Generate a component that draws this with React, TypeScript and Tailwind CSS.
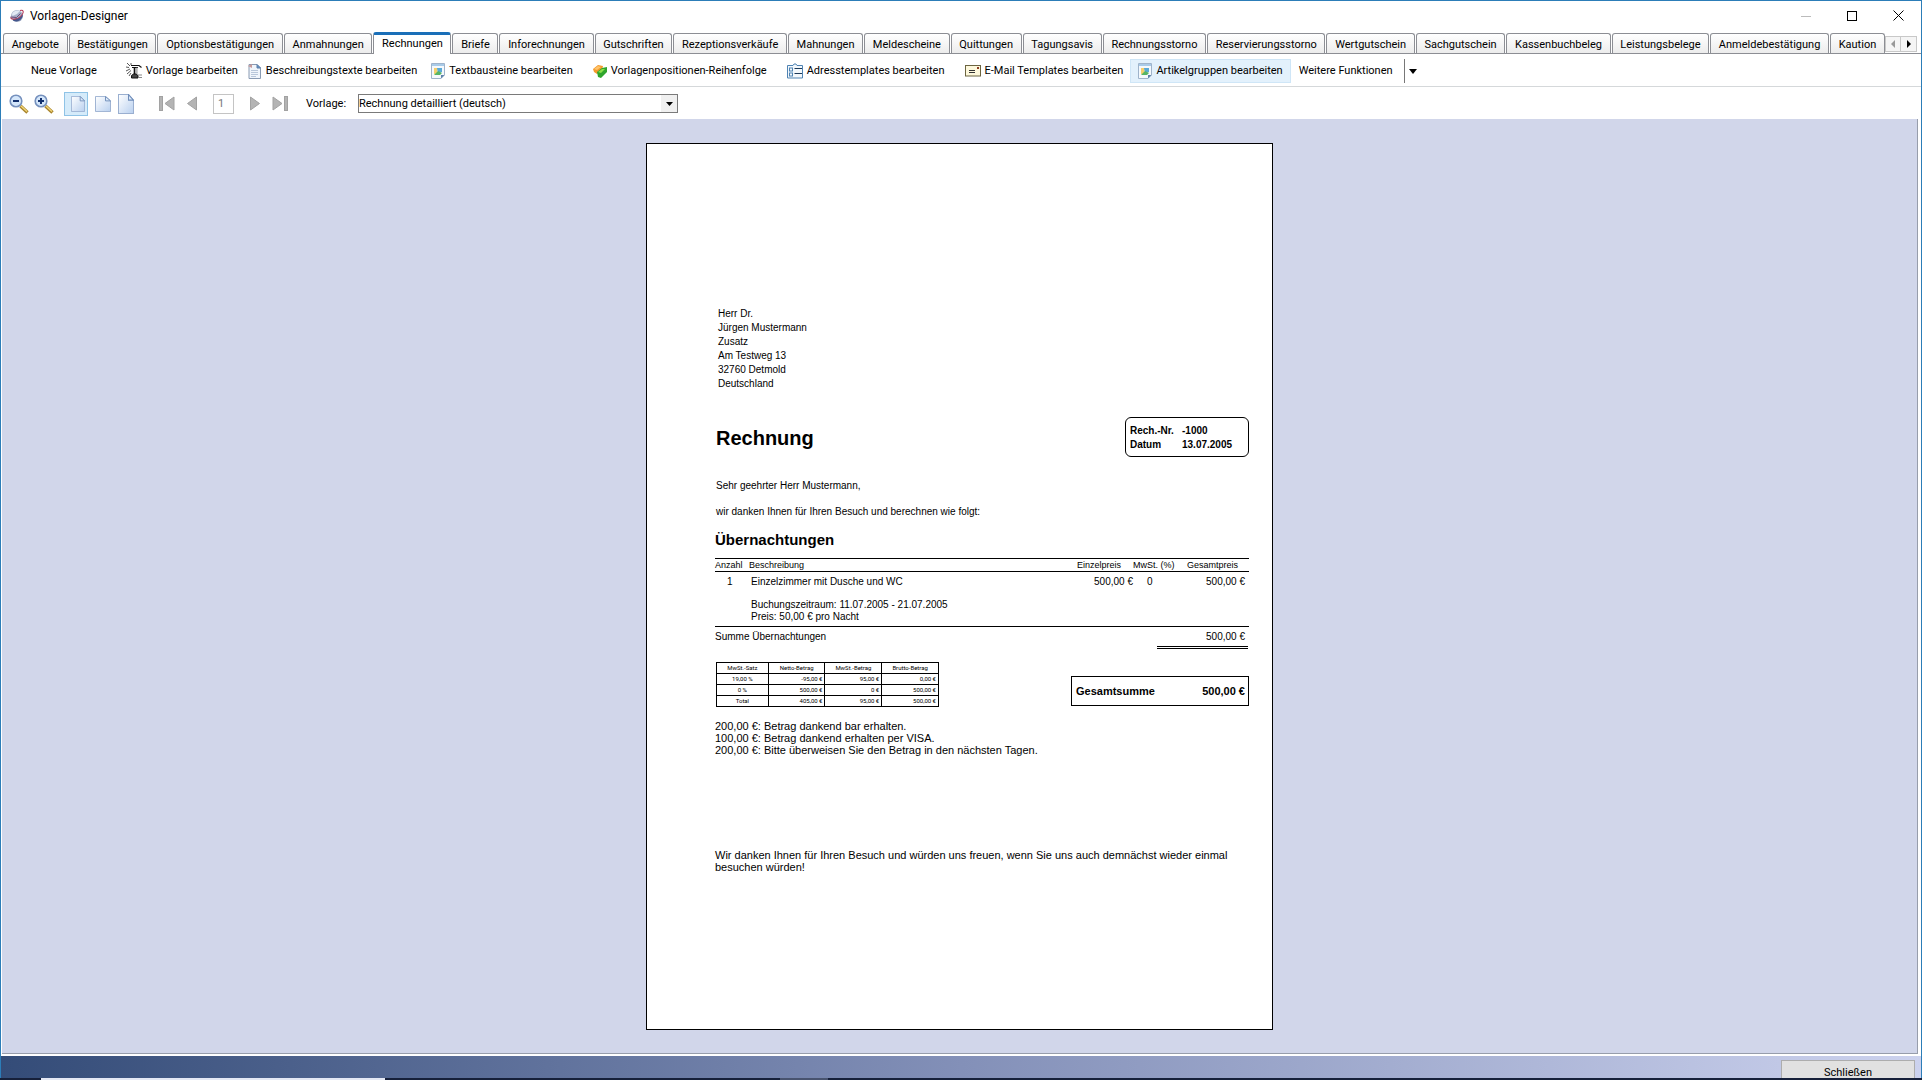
import React, { useState } from "react";
import clsx from "clsx";

const tabs = [
  "Angebote",
  "Bestätigungen",
  "Optionsbestätigungen",
  "Anmahnungen",
  "Rechnungen",
  "Briefe",
  "Inforechnungen",
  "Gutschriften",
  "Rezeptionsverkäufe",
  "Mahnungen",
  "Meldescheine",
  "Quittungen",
  "Tagungsavis",
  "Rechnungsstorno",
  "Reservierungsstorno",
  "Wertgutschein",
  "Sachgutschein",
  "Kassenbuchbeleg",
  "Leistungsbelege",
  "Anmeldebestätigung",
  "Kaution",
];

const address = [
  "Herr Dr.",
  "Jürgen Mustermann",
  "Zusatz",
  "Am Testweg 13",
  "32760 Detmold",
  "Deutschland",
];

const taxRows = [
  ["19,00 %", "-95,00 €", "95,00 €", "0,00 €"],
  ["0 %", "500,00 €", "0 €", "500,00 €"],
  ["Total", "405,00 €", "95,00 €", "500,00 €"],
];

function LogoIcon() {
  return (
    <svg width="16" height="16" viewBox="0 0 16 16">
      <circle cx="8" cy="8" r="6" fill="#a7b1c9" />
      <path d="M3 6C4 3 8 1.500 11 3L8 6L3.500 8Z" fill="#e3e9f4" />
      <path d="M4 12.500C8 14.500 12 13 13.500 9L14 6C11 10 8 11 4 11Z" fill="#44578c" />
      <path
        d="M1.500 9.500C2.500 12.500 9 11.500 12.500 7.500C15.500 4 14.500 1.500 11 2.500"
        fill="none"
        stroke="#b23a58"
        strokeWidth="1.100"
      />
      <path d="M1.500 9L7.500 9.500L11.500 5.500" fill="none" stroke="#6b4a78" />
    </svg>
  );
}

function HammerIcon() {
  return (
    <svg width="16" height="16" viewBox="0 0 16 16" fill="none" stroke="#111">
      <path d="M5 2.500H13L15.500 4.500M6 4.500H12" strokeWidth="1.200" />
      <path d="M8.500 4V12" strokeWidth="1.600" />
      <path d="M11 4.500V11M10 5V11" stroke="#999" />
      <path d="M0 4L3 4.500M1 0L4 3M5 0V2M0 8L4 6M1 11L5 7.500M3 13L5 10" stroke="#444" strokeWidth=".9" />
      <path d="M5.500 15V12.500L7.500 11H10L12 12.500V15Z" fill="#444" />
      <path d="M12 14.500H16M12 12H16" stroke="#888" />
    </svg>
  );
}

function SheetIcon() {
  return (
    <svg width="14" height="16" viewBox="0 0 14 16">
      <path d="M1 1.500H9L12.500 5V15.500H1Z" fill="#f0f5fb" stroke="#8a9bb3" />
      <path d="M9 1.500V5H12.500Z" fill="#5f94cc" stroke="#5f7fa8" />
      <path d="M0 3L4 1V5Z" fill="#c79a9a" />
      <path d="M3 7.500H10M3 9.500H10M3 11.500H10M3 13.500H8" stroke="#b9c7da" />
    </svg>
  );
}

function PictureIcon() {
  return (
    <svg width="14" height="16" viewBox="0 0 14 16">
      <path d="M.5.500H13.500V12L10 15.500H.5Z" fill="#f5f9fd" stroke="#9fb3ca" />
      <path d="M1 1H13V3H1Z" fill="#a9cbe8" />
      <path d="M3 5H7L6 11H3Z" fill="#f4cf6d" />
      <path d="M6 5H11V9L7 10Z" fill="#5aa9d6" />
      <path d="M3 12L7 8L11 10L9 12Z" fill="#57b565" />
      <path d="M10 15.500V12H13.500Z" fill="#5d82aa" />
    </svg>
  );
}

function OrderIcon() {
  return (
    <svg width="14" height="16" viewBox="0 0 14 16">
      <path d="M0 6L5 2L10 3L9 7L4 11L1 9Z" fill="#f39a2c" />
      <path d="M1 6L5 3L8 4L4 7Z" fill="#ffc46b" />
      <path d="M4 9L9 5L14 4V9L8 15L5 14Z" fill="#2fa52c" />
      <path d="M5 9L9 6L12 6L8 10Z" fill="#8ae04a" />
    </svg>
  );
}

function AddressIcon() {
  return (
    <svg width="16" height="16" viewBox="0 0 16 16" fill="none" stroke="#4f83b3">
      <path d="M.5 2.500H6L7 1H9L10 2.500H15.500V15H.5Z" fill="#f3f8fc" />
      <rect x="2.500" y="5" width="3" height="3" />
      <rect x="2.500" y="10" width="3" height="3" />
      <path d="M7.500 5.500H15M7.500 10.500H15" stroke="#1c3958" />
    </svg>
  );
}

function MailIcon() {
  return (
    <svg width="16" height="12" viewBox="0 0 16 12">
      <rect x=".5" y=".5" width="15" height="10.500" fill="#fdf8dc" stroke="#6b6440" />
      <path d="M4 5.500H10M4 7.500H10" stroke="#333" />
      <rect x="12" y="2" width="2" height="2" fill="#8c3a20" />
    </svg>
  );
}

function ZoomIcon({ plus }: { plus?: boolean }) {
  return (
    <svg width="20" height="20" viewBox="0 0 20 20">
      <path d="M11.500 12L18.500 18.500" stroke="#a8842a" strokeWidth="3.400" />
      <path d="M12 12L18 17.600" stroke="#f3d77a" strokeWidth="1.400" />
      <circle cx="7" cy="7" r="5.800" fill="#d4e6fa" stroke="#7590bd" strokeWidth="1.600" />
      <path d={plus ? "M4 7H10M7 4V10" : "M4 7H10"} stroke="#12306e" strokeWidth="2" />
    </svg>
  );
}

function PageIcon({ size }: { size: "sm" | "md" | "lg" }) {
  const box = {
    sm: "h-4 w-[14px]",
    md: "h-4 w-4",
    lg: "h-5 w-4",
  };
  return (
    <svg className={box[size]} viewBox="0 0 16 18" preserveAspectRatio="none">
      <defs>
        <linearGradient id={"page-" + size} x1="0" y1="0" x2="1" y2="1">
          <stop offset="0" stopColor="#fff" />
          <stop offset="1" stopColor="#b9d0ef" />
        </linearGradient>
      </defs>
      <path
        d="M.5.500H10.500L15.500 5.500V17.500H.5Z"
        fill={`url(#page-${size})`}
        stroke="#9aafd0"
      />
      <path d="M10.500.500V5.500H15.500Z" fill="#dce9f8" stroke="#6f8dba" />
    </svg>
  );
}

function NavIcon({ dir, bar }: { dir: "left" | "right"; bar?: boolean }) {
  return (
    <svg
      className={clsx("h-[15px]", bar ? "w-4" : "w-[10px]")}
      viewBox={bar ? "0 0 16 15" : "0 0 10 15"}
      fill="#b4b4b4"
      stroke="#a2a2a2"
    >
      {bar && <rect x={dir === "left" ? 0.5 : 12.5} y=".5" width="3" height="14" />}
      {dir === "left" ? (
        <path d={bar ? "M15 1V14L6 7.500Z" : "M9.500 1V14L.5 7.500Z"} />
      ) : (
        <path d={bar ? "M1 1V14L10 7.500Z" : "M.5 1V14L9.500 7.500Z"} />
      )}
    </svg>
  );
}

type ToolButtonProps = {
  icon?: React.ReactNode;
  label: string;
  className?: string;
};

function ToolButton({ icon, label, className }: ToolButtonProps) {
  return (
    <button
      type="button"
      className={clsx(
        "flex h-6 shrink-0 items-center gap-1 border whitespace-nowrap",
        className ?? "border-transparent px-1"
      )}
    >
      {icon}
      <span>{label}</span>
    </button>
  );
}

function TitleBar() {
  return (
    <header className="flex h-[31px] shrink-0 items-center bg-white pb-[2px] pl-2">
      <LogoIcon />
      <h1 className="ml-[5px] flex-1 text-xs">Vorlagen-Designer</h1>
      <button type="button" aria-label="Minimieren" className="flex h-full w-[46px] items-center justify-center">
        <svg width="10" height="10" viewBox="0 0 10 10" stroke="#bbb">
          <path d="M0 5.500H10" />
        </svg>
      </button>
      <button type="button" aria-label="Maximieren" className="flex h-full w-[46px] items-center justify-center">
        <svg width="10" height="10" viewBox="0 0 10 10" stroke="#000" fill="none">
          <rect x=".5" y=".5" width="9" height="9" />
        </svg>
      </button>
      <button type="button" aria-label="Fenster schließen" className="flex h-full w-[46px] items-center justify-center">
        <svg width="11" height="11" viewBox="0 0 11 11" stroke="#000">
          <path d="M.5.500L10.500 10.500M10.500.500L.5 10.500" />
        </svg>
      </button>
    </header>
  );
}

function TabStrip() {
  const [active, setActive] = useState("Rechnungen");

  return (
    <nav className="flex h-[22px] shrink-0 items-end border-b border-[#8c8e94] bg-white pr-1 pl-[2px]">
      <div className="flex h-full min-w-0 flex-1 items-end gap-px" role="tablist">
        {tabs.map(tab => (
          <button
            key={tab}
            type="button"
            role="tab"
            aria-selected={tab === active}
            onClick={() => setActive(tab)}
            className={clsx(
              "flex-auto rounded-t-[3px] border border-b-0 border-[#8c8e94] px-1 whitespace-nowrap",
              tab === active
                ? "-mb-px h-[22px] border-t-[3px] border-t-[#1a6fb8] bg-white pb-[2px]"
                : "h-5 bg-linear-to-b from-white to-[#ececec] pt-[2px]"
            )}
          >
            {tab}
          </button>
        ))}
      </div>
      <div className="flex h-full items-start pt-1">
        <button type="button" aria-label="Zurück" className="flex h-4 w-4 items-center justify-center border border-[#c8c8c8] bg-[#f5f5f5]">
          <svg width="4" height="8" viewBox="0 0 4 8" fill="#999">
            <path d="M4 0V8L0 4Z" />
          </svg>
        </button>
        <button type="button" aria-label="Weiter" className="flex h-4 w-4 items-center justify-center border border-l-0 border-[#c8c8c8] bg-[#f5f5f5]">
          <svg width="4" height="8" viewBox="0 0 4 8">
            <path d="M0 0V8L4 4Z" />
          </svg>
        </button>
      </div>
    </nav>
  );
}

function EditToolbar() {
  return (
    <div className="flex h-[33px] shrink-0 items-center border-b border-[#d5d8da] bg-white pt-[2px] pl-[25px]">
      <ToolButton label="Neue Vorlage" />
      <div className="ml-[19px] flex items-center">
        <ToolButton icon={<HammerIcon />} label="Vorlage bearbeiten" />
        <ToolButton icon={<SheetIcon />} label="Beschreibungstexte bearbeiten" />
      </div>
      <div className="ml-1 flex items-center gap-[10px]">
        <ToolButton icon={<PictureIcon />} label="Textbausteine bearbeiten" />
        <ToolButton icon={<OrderIcon />} label="Vorlagenpositionen-Reihenfolge" />
        <ToolButton icon={<AddressIcon />} label="Adresstemplates bearbeiten" />
        <ToolButton icon={<MailIcon />} label="E-Mail Templates bearbeiten" />
      </div>
      <ToolButton
        icon={<PictureIcon />}
        label="Artikelgruppen bearbeiten"
        className="ml-[2px] border-[#cfe6f7] bg-[#e3f1fc] px-[7px]"
      />
      <ToolButton label="Weitere Funktionen" className="border-transparent pr-[10px] pl-[7px]" />
      <button type="button" aria-label="Weitere Funktionen öffnen" className="flex h-6 items-center border-l border-[#777] px-1">
        <svg width="8" height="5" viewBox="0 0 8 5">
          <path d="M0 0H8L4 5Z" />
        </svg>
      </button>
    </div>
  );
}

function ViewToolbar() {
  return (
    <div className="flex h-8 shrink-0 items-center bg-white pt-px pl-2">
      <div className="flex gap-[5px]">
        <button type="button" aria-label="Verkleinern">
          <ZoomIcon />
        </button>
        <button type="button" aria-label="Vergrößern">
          <ZoomIcon plus />
        </button>
      </div>
      <div className="ml-[10px] flex items-center gap-[7px]">
        <button type="button" aria-label="Ganze Seite" className="flex h-6 w-6 items-center justify-end border border-[#8fc3e6] bg-[#d5ebfa] pr-[2px]">
          <PageIcon size="sm" />
        </button>
        <button type="button" aria-label="Seitenbreite">
          <PageIcon size="md" />
        </button>
        <button type="button" aria-label="Originalgröße">
          <PageIcon size="lg" />
        </button>
      </div>
      <div className="ml-[25px] flex items-center gap-3">
        <button type="button" aria-label="Erste Seite">
          <NavIcon dir="left" bar />
        </button>
        <button type="button" aria-label="Vorige Seite">
          <NavIcon dir="left" />
        </button>
        <input
          aria-label="Seite"
          defaultValue="1"
          className="mx-1 h-5 w-[21px] border border-[#c4c4c4] pl-1 text-[#777]"
        />
        <button type="button" aria-label="Nächste Seite">
          <NavIcon dir="right" />
        </button>
        <button type="button" aria-label="Letzte Seite">
          <NavIcon dir="right" bar />
        </button>
      </div>
      <label htmlFor="template" className="ml-[18px] w-[52px]">
        Vorlage:
      </label>
      <div className="relative w-80">
        <select
          id="template"
          className="block h-[19px] w-full appearance-none border border-[#7a7a7a] bg-white"
        >
          <option>Rechnung detailliert (deutsch)</option>
        </select>
        <span className="pointer-events-none absolute top-px right-px flex h-[17px] w-4 items-center justify-center bg-[#f0f0f0]">
          <svg width="7" height="4" viewBox="0 0 7 4">
            <path d="M0 0H7L3.500 4Z" />
          </svg>
        </span>
      </div>
    </div>
  );
}

function Invoice() {
  return (
    <article className="aspect-[627/887] w-[627px] shrink-0 border border-black bg-white pt-[163px] pr-[23px] pl-[68px] font-['Liberation_Sans',Arial,sans-serif] text-[10px] leading-3">
      <address className="pl-[3px] leading-[14px] not-italic">
        {address.map(line => (
          <p key={line}>{line}</p>
        ))}
      </address>

      <div className="mt-[26px] flex items-center justify-between pl-px">
        <h2 className="pt-[2px] text-[20px] leading-6 font-bold">Rechnung</h2>
        <dl className="grid h-10 w-[124px] grid-cols-[52px_1fr] content-center rounded-md border border-black pt-px pl-1 leading-[14px] font-bold">
          <dt>Rech.-Nr.</dt>
          <dd>-1000</dd>
          <dt>Datum</dt>
          <dd>13.07.2005</dd>
        </dl>
      </div>

      <div className="mt-[23px] space-y-[14px] pl-px">
        <p>Sehr geehrter Herr Mustermann,</p>
        <p>wir danken Ihnen für Ihren Besuch und berechnen wie folgt:</p>
      </div>

      <h3 className="mt-3 text-[15px] leading-5 font-bold">Übernachtungen</h3>
      <table className="mt-2 w-full table-fixed border-collapse border-y border-black">
        <colgroup>
          <col className="w-[34px]" />
          <col />
          <col className="w-20" />
          <col className="w-[50px]" />
          <col className="w-[66px]" />
        </colgroup>
        <thead>
          <tr className="border-b border-black text-left text-[9px] leading-3 whitespace-nowrap">
            <th className="font-normal">Anzahl</th>
            <th className="font-normal">Beschreibung</th>
            <th className="pr-3 text-right font-normal">Einzelpreis</th>
            <th className="font-normal">MwSt. (%)</th>
            <th className="pl-1 font-normal">Gesamtpreis</th>
          </tr>
        </thead>
        <tbody>
          <tr className="align-top">
            <td className="pt-1 pl-3">1</td>
            <td className="pt-1 pb-[3px] pl-[2px]">
              <p>Einzelzimmer mit Dusche und WC</p>
              <p className="mt-[11px]">Buchungszeitraum: 11.07.2005 - 21.07.2005</p>
              <p>Preis: 50,00 € pro Nacht</p>
            </td>
            <td className="pt-1 text-right">500,00 €</td>
            <td className="pt-1 pl-[14px]">0</td>
            <td className="pt-1 pr-1 text-right">500,00 €</td>
          </tr>
        </tbody>
      </table>
      <div className="mt-1 flex justify-between pr-px">
        <p>Summe Übernachtungen</p>
        <div className="w-[91px]">
          <p className="h-[15px] pr-[3px] text-right">500,00 €</p>
          <div className="h-[3px] border-y border-black" />
        </div>
      </div>

      <div className="mt-[13px] flex items-start justify-between">
        <table className="ml-px w-[223px] border-collapse border border-black font-['Roboto','Noto_Sans',sans-serif] text-[6px] leading-[10px] whitespace-nowrap">
          <thead>
            <tr>
              <th className="w-[52px] border border-black font-normal">MwSt.-Satz</th>
              <th className="w-[57px] border border-black font-normal">Netto-Betrag</th>
              <th className="w-[57px] border border-black font-normal">MwSt.-Betrag</th>
              <th className="w-[57px] border border-black font-normal">Brutto-Betrag</th>
            </tr>
          </thead>
          <tbody>
            {taxRows.map(([rate, ...amounts]) => (
              <tr key={rate}>
                <td className="border border-black text-center">{rate}</td>
                {amounts.map((amount, i) => (
                  <td key={i} className="border border-black pr-[2px] text-right">
                    {amount}
                  </td>
                ))}
              </tr>
            ))}
          </tbody>
        </table>
        <div className="mt-[14px] flex h-[30px] w-[178px] items-center justify-between border border-black pr-[3px] pl-1 text-[11px] font-bold">
          <span>Gesamtsumme</span>
          <span>500,00 €</span>
        </div>
      </div>

      <div className="mt-[13px] text-[11px] leading-3">
        <p>200,00 €: Betrag dankend bar erhalten.</p>
        <p>100,00 €: Betrag dankend erhalten per VISA.</p>
        <p>200,00 €: Bitte überweisen Sie den Betrag in den nächsten Tagen.</p>
      </div>

      <p className="mt-[93px] text-[11px] leading-3">
        Wir danken Ihnen für Ihren Besuch und würden uns freuen, wenn Sie uns auch demnächst wieder einmal
        besuchen würden!
      </p>
    </article>
  );
}

function App() {
  return (
    <div className="flex h-screen flex-col overflow-hidden bg-[#16203a] font-['Roboto','Noto_Sans',sans-serif] text-[11px] leading-4 text-black">
      <div className="flex min-h-0 flex-1 flex-col border-x border-t border-[#2c7db8] bg-white">
        <TitleBar />
        <TabStrip />
        <EditToolbar />
        <ViewToolbar />
        <main className="mr-[3px] ml-px flex min-h-0 flex-1 items-start justify-center border-r border-b border-[#979dab] bg-[#d1d6ea] pt-6">
          <Invoice />
        </main>
        <footer className="mt-[2px] flex h-[22px] shrink-0 justify-end overflow-hidden bg-linear-to-r from-[#344c78] via-[#8390b8] to-[#ccd2ee] pt-1 pr-[6px]">
          <button type="button" className="h-6 w-[134px] shrink-0 border border-[#adadad] bg-[#e1e1e1] pt-px">
            Schließen
          </button>
        </footer>
      </div>
      {/* upper edge of the task bar */}
      <div className="flex h-[2px] shrink-0 pl-[41px]">
        <div className="w-[344px] bg-[#e4e8f4]" />
        <div className="ml-[395px] w-12 bg-[#48536f]" />
      </div>
    </div>
  );
}

export default App;
